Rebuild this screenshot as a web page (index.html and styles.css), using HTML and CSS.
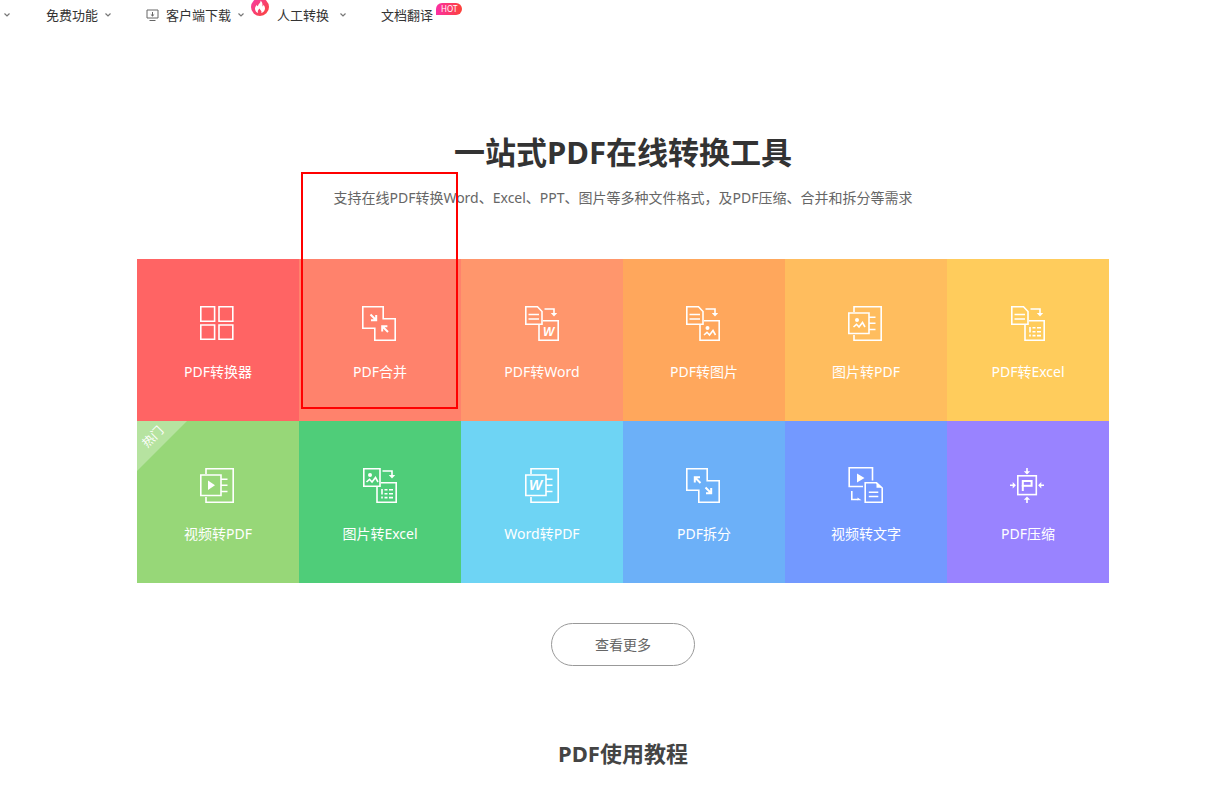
FILE: index.html
```html
<!DOCTYPE html>
<html lang="zh-CN">
<head>
<meta charset="utf-8">
<title>一站式PDF在线转换工具</title>
<link rel="stylesheet" href="styles.css">
</head>
<body>
<svg class="defs" aria-hidden="true">
  <symbol id="chevron" viewBox="0 0 8 8"><path d="M1.500 2.500 4 5l2.500-2.500" fill="none" stroke="#777" stroke-width="1.200"/></symbol>
  <g id="doc-from"><path d="M1.800.8H13.500L18 5.500V18.200H1.800zM4.500 8.500H15M4.500 13H15"/></g>
  <g id="turn-arrow"><path d="M20.500 3H30V8"/><path class="solid" d="M26.800 7h6.400L30 10.400z"/></g>
  <g id="target-box"><path d="M19 14.800H34.200V34.200H15V19"/></g>
  <g id="page-behind"><path d="M6 6V.8H33.200V34.200H6V29M.8 7H21V27.500H.8zM21 11.200h6.500M21 17.300h6.500M21 23.500h6.500"/></g>
  <g id="cells"><path d="M20 21v5.500M20 28.500v2M22.500 21.800h3M27 21.800h4M22.500 25.700h3M27 25.700h4M22.500 29.600h3M27 29.600h4"/></g>
  <g id="photo"><circle class="solid" cx="4" cy="2.500" r="2"/><path d="M.5 9.500 3.500 6.800 6 9.500 9.500 5 12 9.500"/></g>
</svg>

<nav class="nav">
  <svg class="chev"><use href="#chevron"/></svg>
  <a class="free" href="#">免费功能<svg class="chev"><use href="#chevron"/></svg></a>
  <a class="client" href="#"><svg class="monitor" viewBox="0 0 13 12"><path d="M1 1h11v8H1zM3.500 11.500h6M6.500 3v4M4.800 5.400 6.500 7l1.700-1.600" fill="none" stroke="#666"/></svg>客户端下载<svg class="chev"><use href="#chevron"/></svg></a>
  <a class="manual" href="#"><svg class="flame" viewBox="0 0 18 18"><defs><linearGradient id="hot" x2="1" y2="1"><stop stop-color="#f73aa8"/><stop offset="1" stop-color="#fa4638"/></linearGradient></defs><circle cx="9" cy="9" r="9" fill="url(#hot)"/><path d="M9.500 2.500C10 5 7 6 7 8.300 6.200 8 6 7.400 6 6.700 4.300 8.300 3.600 10 4.200 12c.4 1.500 1.500 2.500 3 3-.9-1.800-.3-3.200 1.600-4.600 0 1.300 1.700 2 1.700 3.300 0 .5-.2 1-.5 1.300 2.200-.5 4-2.200 4-4.500 0-1.700-.8-2.800-1.500-3.700 0 .8-.4 1.300-1 1.600C11.700 6 11.300 3.800 9.500 2.500z" fill="#fff"/></svg><span>人工转换</span><svg class="chev"><use href="#chevron"/></svg></a>
  <a class="translate" href="#">文档翻译<span class="hot">HOT</span></a>
</nav>

<main class="main">
  <h1 class="title">一站式PDF在线转换工具</h1>
  <p class="subtitle">支持在线PDF转换Word、Excel、PPT、图片等多种文件格式，及PDF压缩、合并和拆分等需求</p>

  <div class="tools">
    <a class="tool converter" href="#"><svg class="icon" viewBox="0 0 36 36"><path d="M.8.8h13.800v14.400H.8zM19 .8h13.800v14.400H19zM.8 19h13.800v14.200H.8zM19 19h13.800v14.200H19z"/></svg>PDF转换器</a>
    <a class="tool merge" href="#"><svg class="icon" viewBox="0 0 36 36"><path d="M.8.8H21.200V12.800H33.200V34.200H12.800V22.200H.8z"/><path class="bold" d="M8.500 8.500l5.500 5.500M14.200 9v5.200H9M26 26l-5.500-5.500M20.200 25.500v-5.200h5.200"/></svg>PDF合并<span class="marker"></span></a>
    <a class="tool to-word" href="#"><svg class="icon" viewBox="0 0 36 36"><use href="#doc-from"/><use href="#turn-arrow"/><use href="#target-box"/><text x="19" y="29.500">W</text></svg>PDF转Word</a>
    <a class="tool to-image" href="#"><svg class="icon" viewBox="1 0 36 36"><use href="#doc-from"/><use href="#turn-arrow"/><use href="#target-box"/><use href="#photo" x="18.500" y="19.500"/></svg>PDF转图片</a>
    <a class="tool image-pdf" href="#"><svg class="icon" viewBox="0 0 36 36"><use href="#page-behind"/><use href="#photo" x="5" y="11.500"/></svg>图片转PDF</a>
    <a class="tool to-excel" href="#"><svg class="icon" viewBox="0 0 36 36"><use href="#doc-from"/><use href="#turn-arrow"/><use href="#target-box"/><use href="#cells"/></svg>PDF转Excel</a>
    <a class="tool video-pdf" href="#"><span class="ribbon"><span class="ribbon-text">热门</span></span><svg class="icon" viewBox="0 0 36 36"><use href="#page-behind"/><path class="solid" d="M8 12.500v9.500l7-4.700z"/></svg>视频转PDF</a>
    <a class="tool image-excel" href="#"><svg class="icon" viewBox="0 0 36 36"><path d="M1.800.8H18V18.200H1.800z"/><use href="#photo" x="4" y="4.500"/><use href="#turn-arrow"/><use href="#target-box"/><use href="#cells"/></svg>图片转Excel</a>
    <a class="tool word-pdf" href="#"><svg class="icon" viewBox="-1 0 36 36"><use href="#page-behind"/><text class="heavy" x="4" y="22">W</text></svg>Word转PDF</a>
    <a class="tool split" href="#"><svg class="icon" viewBox="0 0 36 36"><path d="M.8.8H21.200V12.800H33.200V34.200H12.800V22.200H.8z"/><path class="bold" d="M14.500 15 9 9.500M8.800 14.500V9.300H14M19.500 19.500l5.500 5.500M25.200 20v5.200H20"/></svg>PDF拆分</a>
    <a class="tool video-text" href="#"><svg class="icon" viewBox="0 0 36 36"><path d="M15 18.500H1.200V-.2H24.500V12.500M3.800 23v8.500H10"/><path class="solid" d="M9 5.500v9l7.500-4.500zM9.500 29.500 13.500 32.300h-4zM28.500 14.500v5.300h5.700z"/><path d="M17.200 14.800H28.500L34.200 20V34.200H17.200zM20.800 24.200h9.500M20.800 28.500h9.500"/></svg>视频转文字</a>
    <a class="tool compress" href="#"><svg class="icon" viewBox="0 0 36 36"><rect x="7.800" y="7.800" width="18.500" height="18.800"/><rect class="bold" x="12.800" y="13" width="8.800" height="4.800"/><path class="bold" d="M12.800 17v6"/><path d="M17 0v4M17 35v-4M0 17.300h4M34 17.300h-4"/><path class="solid" d="M13.800 3.300h6.400L17 6.500zM13.800 31.800h6.400L17 28.600zM2.700 14.100v6.400l3.200-3.200zM31.300 14.100v6.400l-3.200-3.200z"/></svg>PDF压缩</a>
  </div>

  <button class="more" type="button">查看更多</button>
  <h2 class="section-title">PDF使用教程</h2>
</main>
</body>
</html>
```
FILE: styles.css
```css
* {
  box-sizing: border-box;
}

body {
  margin: 0;
  background: #fff;
  color: #333;
  font-family: "Noto Sans", "Noto Sans CJK SC", sans-serif;
}

a {
  color: inherit;
  text-decoration: none;
}

.defs {
  position: absolute;
  width: 0;
  height: 0;
}

.nav {
  display: flex;
  align-items: center;
  height: 30px;
  padding-left: 3px;
  font-size: 13px;
  line-height: 20px;
  white-space: nowrap;
}

.nav a {
  display: flex;
  align-items: center;
}

.chev {
  width: 8px;
  height: 8px;
  margin-left: 6px;
}

.nav > .chev {
  margin-left: 0;
}

.free {
  margin-left: 35px;
}

.client,
.translate {
  margin-left: 34px;
}

.monitor {
  width: 13px;
  height: 12px;
  margin-right: 7px;
}

.manual {
  margin-left: 6px;
}

.flame {
  width: 18px;
  height: 18px;
  margin: 0 8px 16px 0;
}

.manual .chev {
  margin-left: 10px;
}

.hot {
  height: 12px;
  margin: 0 0 12px 3px;
  padding: 0 5px;
  border-radius: 6px 6px 6px 0;
  background: linear-gradient(90deg, #fb2fa4, #fc4238);
  color: #fff;
  font: 8px/12px "Noto Sans", sans-serif;
}

.main {
  display: flex;
  flex-direction: column;
  align-items: center;
  padding: 99px 0 20px 23px;
}

.title {
  margin: 0;
  font-size: 31px;
  line-height: 46px;
}

.subtitle {
  margin: 13px 0 51px;
  color: #666;
  font-size: 14px;
  line-height: 20px;
}

.tools {
  display: grid;
  grid-template-columns: repeat(6, 1fr);
  width: 100%;
  max-width: 972px;
}

.tool {
  position: relative;
  display: flex;
  flex-direction: column;
  align-items: center;
  gap: 20px;
  padding: 47px 0 39px;
  color: #fff;
  font-size: 14px;
  line-height: 20px;
}

.icon {
  width: 36px;
  height: 36px;
  overflow: visible;
  fill: none;
  stroke: #fff;
  stroke-width: 1.6;
}

.icon text {
  fill: #fff;
  stroke: none;
  font: italic bold 12px "Liberation Sans", sans-serif;
}

.icon .heavy {
  font-size: 14px;
}

.bold {
  stroke-width: 2;
}

.solid {
  fill: #fff;
  stroke: none;
}

.converter { background: #ff6464; }
.merge { background: #ff826c; }
.to-word { background: #ff966c; }
.to-image { background: #ffa75c; }
.image-pdf { background: #ffbd5e; }
.to-excel { background: #ffcc5c; }
.video-pdf { background: #97d778; }
.image-excel { background: #4fcd79; }
.word-pdf { background: #6ed4f4; }
.split { background: #6cb0f8; }
.video-text { background: #7399ff; }
.compress { background: #9983ff; }

.marker {
  position: absolute;
  z-index: 1;
  top: -87px;
  left: 2px;
  width: 157px;
  height: 237px;
  border: 2px solid #f00;
  pointer-events: none;
}

.ribbon {
  position: absolute;
  top: 0;
  left: 0;
  display: flex;
  width: 50px;
  height: 50px;
  padding: 6px 0 0 4px;
  background: rgba(255, 255, 255, 0.3);
  clip-path: polygon(0 0, 100% 0, 0 100%);
}

.ribbon-text {
  width: 24px;
  height: 20px;
  font-size: 12px;
  transform: rotate(-45deg);
}

.more {
  width: 144px;
  height: 43px;
  margin-top: 40px;
  padding: 0 0 2px;
  border: 1px solid #999;
  border-radius: 22px;
  background: #fff;
  color: #666;
  font: inherit;
  font-size: 14px;
}

.section-title {
  margin: 71px 0 0;
  color: #444;
  font-size: 22px;
  line-height: 32px;
}
```
